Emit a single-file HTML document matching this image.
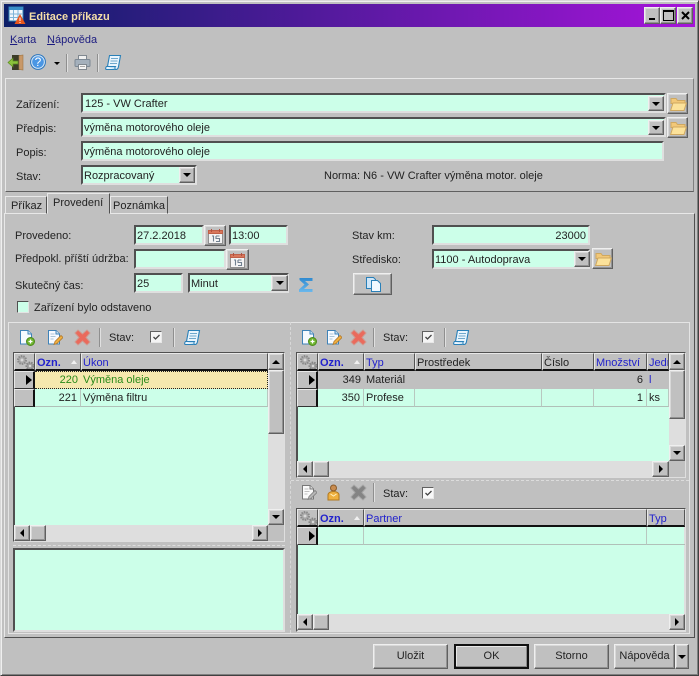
<!DOCTYPE html>
<html lang="cs"><head><meta charset="utf-8"><title>Editace příkazu</title>
<style>
*{box-sizing:border-box}
html,body{margin:0;padding:0}
body{width:699px;height:676px;overflow:hidden;background:#c0c0c0;position:relative;font:11px/14px "Liberation Sans",sans-serif;color:#222}
#w div,#w span,#w svg{position:absolute}
.t{white-space:nowrap}
.i{background:#ccffe9;border:2px solid;border-color:#505050 #dfdfdf #dfdfdf #505050;white-space:nowrap;padding:2px 0 0 1px;line-height:15px;overflow:hidden}
.b{background:#c0c0c0;border:1px solid;border-color:#efefef #606060 #606060 #efefef;box-shadow:inset -1px -1px #929292,inset 1px 1px #d8d8d8;text-align:center}
.h{background:#c0c0c0;border-right:1px solid #555;border-bottom:2px solid #111;border-left:1px solid #e8e8e8;border-top:1px solid #e8e8e8;white-space:nowrap;overflow:hidden;padding-left:1px;line-height:18px;color:#2222cc}
.c{border-right:1px solid #b8c8c0;border-bottom:1px solid #b0c0b8;white-space:nowrap;overflow:hidden;line-height:19px;padding:0 2px}
.r{text-align:right;padding-right:3px}
.tri{width:0;height:0}
.dn{border:4px solid transparent;border-top:4px solid #000;border-bottom:0;left:50%;top:50%;margin:-2px 0 0 -4px}
.up{border:4px solid transparent;border-bottom:4px solid #000;border-top:0;left:50%;top:50%;margin:-2px 0 0 -4px}
.lf{border:4px solid transparent;border-right:4px solid #000;border-left:0;left:50%;top:50%;margin:-4px 0 0 -2px}
.rt{border:4px solid transparent;border-left:4px solid #000;border-right:0;left:50%;top:50%;margin:-4px 0 0 -2px}
.sep{width:2px;background:#8f8f8f;border-right:1px solid #e0e0e0}
.tr{background:#dedede}
.d{border-top:1px dashed #dcdcdc}
.dv{border-left:1px dashed #d8d8d8}
.s{background:#e4e4e4}
</style></head><body><div id="w">
<svg width="0" height="0" style="left:0;top:0"><defs>
<symbol id="new" viewBox="0 0 17 17"><path d="M2.500 1.500h7.500l3.500 3.500v10h-11z" fill="#f6faff" stroke="#3f83b8"/><path d="M10 1.500v3.500h3.500" fill="#cfe4f5" stroke="#3f83b8"/><circle cx="12.500" cy="12.500" r="4" fill="#6fb52f" stroke="#4c8a1c"/><path d="M10.500 12.500h4M12.500 10.500v4" stroke="#fff" stroke-width="1.300"/></symbol>
<symbol id="edit" viewBox="0 0 17 17"><path d="M2.500 1.500h7.500l3.500 3.500v10h-11z" fill="#f6faff" stroke="#3f83b8"/><path d="M10 1.500v3.500h3.500" fill="#cfe4f5" stroke="#3f83b8"/><path d="M4.500 5h4M4.500 7.500h5M4.500 10h3" stroke="#a9c4d8"/><path d="M8 15.500l1-3 6-6 2 2-6 6z" fill="#f0b040" stroke="#b07a30" stroke-width=".8"/></symbol>
<symbol id="del" viewBox="0 0 17 17"><path d="M1 4l3-3 4.500 4 4.500-4 3 3-4 4.500 4 4.500-3 3-4.500-4-4.500 4-3-3 4-4.500z" fill="#ea6a5c" stroke="#cf9a90"/></symbol>
<symbol id="note" viewBox="0 0 17 17"><path d="M4.500 1.500h11l-2 11c-.3 1.800-1 3-2.500 3h-9.500c-1 0-1.300-1.800 0-3h1z" fill="#eaf5fd" stroke="#2a80b8" stroke-width="1.100"/><path d="M6 4.500h7M5.500 7h7M5 9.500h7" stroke="#6fa8cc"/><path d="M1.500 12.500h9c-.8 1-.8 2 0 3" fill="#bfe0f5" stroke="#2a80b8"/></symbol>
<symbol id="cal" viewBox="0 0 17 17"><rect x="1.500" y="2.500" width="14" height="13" fill="#f4f4f4" stroke="#909090"/><rect x="1.500" y="2.500" width="14" height="3" fill="#d8775c" stroke="#c06048"/><path d="M4.500 1v3M12.500 1v3" stroke="#b05040"/><path d="M5 8h1.500v5.500M9 8h3.500M9 8v2.500h3.500v3H9" fill="none" stroke="#708090" stroke-width="1.100"/></symbol>
<symbol id="fold" viewBox="0 0 17 15"><path d="M1 3V1.500h5l1.500 2H15v3H1z" fill="#f2c878" stroke="#cfa860"/><path d="M.6 13.500 3 6h13.400l-2.400 7.500z" fill="#fce29a" stroke="#cfa860"/></symbol>
<symbol id="gears" viewBox="0 0 19 17"><circle cx="6" cy="6" r="4" fill="#a8a8a8" stroke="#8a8a8a" stroke-width="2" stroke-dasharray="1.500 1"/><circle cx="6" cy="6" r="1.500" fill="#d8d8d8"/><circle cx="14" cy="12" r="3.500" fill="#a0a0a0" stroke="#848484" stroke-width="2" stroke-dasharray="1.500 1"/><circle cx="14" cy="12" r="1.200" fill="#d8d8d8"/></symbol>
</defs></svg>

<!-- window frame -->
<div style="left:0;top:0;width:699px;height:676px;border:1px solid;border-color:#d8d8d8 #404040 #404040 #d8d8d8;box-shadow:inset 1px 1px #efefef,inset -1px -1px #808080"></div>
<div style="left:4px;top:4px;width:691px;height:23px;background:linear-gradient(90deg,#0c1f68,#a614da)"></div>
<svg style="left:8px;top:6px" width="18" height="19" viewBox="0 0 18 19"><rect x="1" y="1" width="14" height="14" fill="#eef6fc" stroke="#2f7fb0"/><rect x="1" y="1" width="14" height="3" fill="#3a8fc8"/><path d="M5.500 4v11M10 4v11M1 8h14M1 11.500h14" stroke="#7db4d8"/><path d="M12 8l5.500 10h-11z" fill="#e8561c"/><path d="M12 11.500v3.500M12 16v1" stroke="#fff"/></svg>
<div class="t" style="left:29px;top:10px;color:#f5dfa8;font-weight:bold;font-size:11px">Editace příkazu</div>
<div class="b" style="left:644px;top:7px;width:16px;height:17px"><div style="left:4px;top:10px;width:6px;height:2px;background:#000"></div></div>
<div class="b" style="left:660px;top:7px;width:16px;height:17px"><div style="left:2px;top:2px;width:11px;height:11px;border:1px solid #000;border-top-width:2px"></div></div>
<div class="b" style="left:677px;top:7px;width:16px;height:17px"><svg style="left:3px;top:3px" width="9" height="9" viewBox="0 0 9 9"><path d="M1 1l7 7M8 1L1 8" stroke="#000" stroke-width="2"/></svg></div>

<!-- menu -->
<div class="t" style="left:10px;top:33px;color:#1c1c80"><u>K</u>arta</div>
<div class="t" style="left:47px;top:33px;color:#1c1c80"><u>N</u>ápověda</div>

<!-- toolbar -->
<svg style="left:7px;top:54px" width="17" height="17" viewBox="0 0 17 17"><path d="M5 1h11v15H5z" fill="#3c3c28"/><path d="M12 1.500l4-.5v15l-4-.5z" fill="#c89868" stroke="#a07848" stroke-width=".6"/><path d="M1 8.500 6 4v3h5v3H6v3z" fill="#8cc43c" stroke="#5a8a20" stroke-width=".7"/></svg>
<svg style="left:30px;top:54px" width="16" height="16" viewBox="0 0 16 16"><circle cx="8" cy="8" r="7.400" fill="#d4e6f6" stroke="#2a74bc"/><circle cx="8" cy="8" r="5.800" fill="#4a96e4"/></svg>
<div class="t" style="left:34px;top:55px;width:8px;text-align:center;color:#fff;font-size:12px">?</div>
<div class="tri" style="left:54px;top:62px;border:3px solid transparent;border-top:3px solid #000;border-bottom:0"></div>
<div class="sep" style="left:66px;top:54px;height:18px"></div>
<svg style="left:74px;top:54px" width="17" height="17" viewBox="0 0 17 17"><path d="M4.500 1.500h8v4h-8z" fill="#f0f0f0" stroke="#808890"/><rect x="1" y="5.500" width="15" height="7" rx="1" fill="#a4b0bc" stroke="#7c8894"/><path d="M4.500 10.500h8v5h-8z" fill="#f4f4f4" stroke="#808890"/><path d="M6 12.500h5" stroke="#aaa"/></svg>
<div class="sep" style="left:97px;top:54px;height:18px"></div>
<svg style="left:105px;top:54px" width="17" height="17"><use href="#note"/></svg>

<!-- top group -->
<div style="left:5px;top:78px;width:689px;height:114px;border:1px solid;border-color:#e8e8e8 #808080 #606060 #e8e8e8"></div>
<div class="t" style="left:16px;top:98px">Zařízení:</div>
<div class="i" style="left:81px;top:93px;width:585px;height:20px;padding-left:2px">125 - VW Crafter</div>
<div class="b" style="left:648px;top:96px;width:16px;height:15px"><div class="tri dn"></div></div>
<div class="b" style="left:667px;top:93px;width:21px;height:21px"><svg style="left:2px;top:3px" width="17" height="15"><use href="#fold"/></svg></div>
<div class="t" style="left:16px;top:122px">Předpis:</div>
<div class="i" style="left:81px;top:117px;width:585px;height:20px">výměna motorového oleje</div>
<div class="b" style="left:648px;top:120px;width:16px;height:15px"><div class="tri dn"></div></div>
<div class="b" style="left:667px;top:117px;width:21px;height:21px"><svg style="left:2px;top:3px" width="17" height="15"><use href="#fold"/></svg></div>
<div class="t" style="left:16px;top:146px">Popis:</div>
<div class="i" style="left:81px;top:141px;width:583px;height:20px">výměna motorového oleje</div>
<div class="t" style="left:16px;top:170px">Stav:</div>
<div class="i" style="left:81px;top:165px;width:116px;height:20px">Rozpracovaný</div>
<div class="b" style="left:179px;top:167px;width:16px;height:16px"><div class="tri dn"></div></div>
<div class="t" style="left:324px;top:169px">Norma: N6 - VW Crafter výměna motor. oleje</div>

<!-- tabs -->
<div style="left:4px;top:213px;width:691px;height:425px;border:1px solid;border-color:#e8e8e8 #505050 #505050 #e8e8e8"></div>
<div style="left:5px;top:196px;width:42px;height:18px;border:1px solid;border-color:#e8e8e8 #505050 transparent #e8e8e8"></div>
<div class="t" style="left:11px;top:199px">Příkaz</div>
<div style="left:47px;top:193px;width:63px;height:21px;background:#c0c0c0;border:1px solid;border-color:#e8e8e8 #505050 #c0c0c0 #e8e8e8"></div>
<div class="t" style="left:53px;top:196px">Provedení</div>
<div style="left:110px;top:196px;width:58px;height:18px;border:1px solid;border-color:#e8e8e8 #505050 transparent #e8e8e8"></div>
<div class="t" style="left:113px;top:199px">Poznámka</div>

<!-- form -->
<div class="t" style="left:15px;top:229px">Provedeno:</div>
<div class="i" style="left:134px;top:225px;width:70px;height:20px">27.2.2018</div>
<div class="b" style="left:204px;top:225px;width:22px;height:21px"><svg style="left:2px;top:2px" width="17" height="17"><use href="#cal"/></svg></div>
<div class="i" style="left:229px;top:225px;width:59px;height:20px">13:00</div>
<div class="t" style="left:15px;top:252px">Předpokl. příští údržba:</div>
<div class="i" style="left:134px;top:249px;width:92px;height:20px"></div>
<div class="b" style="left:226px;top:249px;width:23px;height:21px"><svg style="left:2px;top:2px" width="17" height="17"><use href="#cal"/></svg></div>
<div class="t" style="left:15px;top:279px">Skutečný čas:</div>
<div class="i" style="left:134px;top:273px;width:49px;height:20px">25</div>
<div class="i" style="left:188px;top:273px;width:101px;height:20px">Minut</div>
<div class="b" style="left:271px;top:275px;width:17px;height:16px"><div class="tri dn"></div></div>
<svg style="left:298px;top:277px" width="16" height="16" viewBox="0 0 16 16"><defs><linearGradient id="sg" x1="0" y1="0" x2="0" y2="1"><stop offset="0" stop-color="#2f8ad0"/><stop offset="1" stop-color="#6ab8ec"/></linearGradient></defs><path d="M1.500 1h13v3H7l4 3.500L6 12h8.500v3H1v-2.500L6.500 7.500 1.500 3z" fill="url(#sg)"/></svg>
<div style="left:17px;top:301px;width:12px;height:12px;background:#ccffe9;border:1px solid;border-color:#505050 #e4e4e4 #e4e4e4 #505050"></div>
<div class="t" style="left:34px;top:301px">Zařízení bylo odstaveno</div>

<div class="t" style="left:352px;top:229px">Stav km:</div>
<div class="i" style="left:432px;top:225px;width:158px;height:20px;text-align:right;padding-right:2px">23000</div>
<div class="t" style="left:352px;top:253px">Středisko:</div>
<div class="i" style="left:432px;top:249px;width:158px;height:20px">1100 - Autodoprava</div>
<div class="b" style="left:574px;top:251px;width:16px;height:16px"><div class="tri dn"></div></div>
<div class="b" style="left:592px;top:248px;width:21px;height:21px"><svg style="left:2px;top:3px" width="17" height="15"><use href="#fold"/></svg></div>
<div class="b" style="left:353px;top:273px;width:39px;height:22px"><svg style="left:11px;top:2px" width="17" height="17" viewBox="0 0 17 17"><path d="M1.500 1.500h7l2 2v9h-9z" fill="#cfe6f8" stroke="#2a80b8"/><path d="M6.500 4.500h6l3 3v8h-9z" fill="#f0f8ff" stroke="#2a80b8"/></svg></div>

<!-- panels -->
<div class="s" style="left:8px;top:322px;width:682px;height:1px"></div>
<div class="s" style="left:8px;top:322px;width:1px;height:311px"></div>
<div class="dv" style="left:290px;top:322px;height:311px"></div>
<div class="s" style="left:689px;top:322px;width:1px;height:311px"></div>
<div class="s" style="left:8px;top:633px;width:682px;height:1px"></div>

<!-- left toolbar -->
<svg style="left:18px;top:329px" width="17" height="17"><use href="#new"/></svg>
<svg style="left:46px;top:329px" width="17" height="17"><use href="#edit"/></svg>
<svg style="left:74px;top:329px" width="17" height="17"><use href="#del"/></svg>
<div class="sep" style="left:99px;top:328px;height:19px"></div>
<div class="t" style="left:109px;top:331px">Stav:</div>
<div style="left:150px;top:331px;width:12px;height:12px;background:#f4f4f4;border:1px solid;border-color:#606060 #e8e8e8 #e8e8e8 #606060"><svg style="left:1px;top:1px" width="9" height="9" viewBox="0 0 9 9"><path d="M1.500 4l2 2 4-4" fill="none" stroke="#444" stroke-width="1.300"/></svg></div>
<div class="sep" style="left:173px;top:328px;height:19px"></div>
<svg style="left:184px;top:329px" width="17" height="17"><use href="#note"/></svg>

<!-- left grid -->
<div style="left:13px;top:352px;width:272px;height:190px;background:#ccffe9;border:2px solid;border-color:#505050 #dfdfdf #dfdfdf #505050"></div>
<div class="h" style="left:14px;top:353px;width:21px;height:18px"><svg style="left:1px;top:0" width="19" height="17"><use href="#gears"/></svg></div>
<div class="h" style="left:35px;top:353px;width:46px;height:18px"><b>Ozn.</b><span style="left:35px;top:6px;width:0;height:0;border:3.500px solid transparent;border-bottom:4px solid #f0f0f0;border-top:0"></span></div>
<div class="h" style="left:81px;top:353px;width:187px;height:18px">Úkon</div>
<div class="h" style="left:14px;top:371px;width:21px;height:18px;color:#000;border-bottom:1px solid #333;border-right:2px solid #111"><div class="tri" style="left:11px;top:3px;border:5px solid transparent;border-left:6px solid #000;border-right:0"></div></div>
<div class="c r" style="left:35px;top:371px;width:46px;height:18px;background:#f6e8ae;color:#2a8a1a;border:0;border-top:1px dotted #222;border-bottom:1px dotted #222;line-height:16px">220</div>
<div class="c" style="left:81px;top:371px;width:187px;height:18px;background:#f6e8ae;color:#2a8a1a;border:0;border-top:1px dotted #222;border-bottom:1px dotted #222;border-right:1px dotted #222;line-height:16px">Výměna oleje</div>
<div class="h" style="left:14px;top:389px;width:21px;height:18px;border-bottom:1px solid #333;border-right:2px solid #111"></div>
<div class="c r" style="left:35px;top:389px;width:46px;height:18px">221</div>
<div class="c" style="left:81px;top:389px;width:187px;height:18px">Výměna filtru</div>
<div class="tr" style="left:268px;top:353px;width:16px;height:172px"></div>
<div class="b" style="left:268px;top:353px;width:16px;height:17px"><div class="tri up"></div></div>
<div class="b" style="left:268px;top:370px;width:16px;height:64px"></div>
<div class="b" style="left:268px;top:509px;width:16px;height:16px"><div class="tri dn"></div></div>
<div class="tr" style="left:14px;top:525px;width:254px;height:16px"></div>
<div class="b" style="left:14px;top:525px;width:16px;height:16px"><div class="tri lf"></div></div>
<div class="b" style="left:30px;top:525px;width:16px;height:16px"></div>
<div class="b" style="left:252px;top:525px;width:16px;height:16px"><div class="tri rt"></div></div>
<div style="left:268px;top:525px;width:16px;height:16px;background:#c0c0c0"></div>
<div class="d" style="left:13px;top:545px;width:272px"></div>
<div class="i" style="left:13px;top:548px;width:272px;height:84px"></div>

<!-- right toolbar -->
<svg style="left:300px;top:329px" width="17" height="17"><use href="#new"/></svg>
<svg style="left:325px;top:329px" width="17" height="17"><use href="#edit"/></svg>
<svg style="left:350px;top:329px" width="17" height="17"><use href="#del"/></svg>
<div class="sep" style="left:373px;top:328px;height:19px"></div>
<div class="t" style="left:383px;top:331px">Stav:</div>
<div style="left:422px;top:331px;width:12px;height:12px;background:#f4f4f4;border:1px solid;border-color:#606060 #e8e8e8 #e8e8e8 #606060"><svg style="left:1px;top:1px" width="9" height="9" viewBox="0 0 9 9"><path d="M1.500 4l2 2 4-4" fill="none" stroke="#444" stroke-width="1.300"/></svg></div>
<div class="sep" style="left:444px;top:328px;height:19px"></div>
<svg style="left:453px;top:329px" width="17" height="17"><use href="#note"/></svg>

<!-- right grid 1 -->
<div style="left:296px;top:352px;width:390px;height:126px;background:#ccffe9;border:2px solid;border-color:#505050 #dfdfdf #dfdfdf #505050"></div>
<div class="h" style="left:297px;top:353px;width:21px;height:18px"><svg style="left:1px;top:0" width="19" height="17"><use href="#gears"/></svg></div>
<div class="h" style="left:318px;top:353px;width:46px;height:18px"><b>Ozn.</b><span style="left:35px;top:6px;width:0;height:0;border:3.500px solid transparent;border-bottom:4px solid #f0f0f0;border-top:0"></span></div>
<div class="h" style="left:364px;top:353px;width:51px;height:18px">Typ</div>
<div class="h" style="left:415px;top:353px;width:127px;height:18px;color:#222">Prostředek</div>
<div class="h" style="left:542px;top:353px;width:52px;height:18px;color:#222">Číslo</div>
<div class="h" style="left:594px;top:353px;width:53px;height:18px">Množství</div>
<div class="h" style="left:647px;top:353px;width:22px;height:18px">Jedn</div>
<div class="h" style="left:297px;top:371px;width:21px;height:18px;border-bottom:1px solid #333;border-right:2px solid #111"><div class="tri" style="left:11px;top:3px;border:5px solid transparent;border-left:6px solid #000;border-right:0"></div></div>
<div style="left:318px;top:371px;width:351px;height:18px;background:#c0c0c0"></div>
<div class="t" style="left:318px;top:371px;width:46px;text-align:right;padding-right:3px;line-height:18px">349</div>
<div class="t" style="left:366px;top:371px;line-height:18px">Materiál</div>
<div class="t" style="left:594px;top:371px;width:52px;text-align:right;padding-right:3px;line-height:18px">6</div>
<div class="t" style="left:649px;top:371px;line-height:18px;color:#2222cc">l</div>
<div class="h" style="left:297px;top:389px;width:21px;height:18px;border-bottom:1px solid #333;border-right:2px solid #111"></div>
<div class="c r" style="left:318px;top:389px;width:46px;height:18px">350</div>
<div class="c" style="left:364px;top:389px;width:51px;height:18px">Profese</div>
<div class="c" style="left:415px;top:389px;width:127px;height:18px"></div>
<div class="c" style="left:542px;top:389px;width:52px;height:18px"></div>
<div class="c r" style="left:594px;top:389px;width:53px;height:18px">1</div>
<div class="c" style="left:647px;top:389px;width:22px;height:18px">ks</div>
<div class="tr" style="left:669px;top:353px;width:16px;height:108px"></div>
<div class="b" style="left:669px;top:353px;width:16px;height:17px"><div class="tri up"></div></div>
<div class="b" style="left:669px;top:370px;width:16px;height:49px"></div>
<div class="b" style="left:669px;top:445px;width:16px;height:16px"><div class="tri dn"></div></div>
<div class="tr" style="left:297px;top:461px;width:372px;height:16px"></div>
<div class="b" style="left:297px;top:461px;width:16px;height:16px"><div class="tri lf"></div></div>
<div class="b" style="left:313px;top:461px;width:16px;height:16px"></div>
<div class="b" style="left:652px;top:461px;width:17px;height:16px"><div class="tri rt"></div></div>
<div style="left:669px;top:461px;width:16px;height:16px;background:#c0c0c0"></div>
<div class="d" style="left:291px;top:480px;width:398px"></div>

<!-- right toolbar 2 -->
<svg style="left:300px;top:484px;filter:grayscale(1)" width="17" height="17"><use href="#edit"/></svg>
<svg style="left:325px;top:484px" width="17" height="17" viewBox="0 0 17 17"><circle cx="8.500" cy="4" r="3" fill="#c88c50" stroke="#8a5a28"/><path d="M3 16v-5c0-2 2-3.500 5.500-3.500S14 9 14 11v5z" fill="#eeb040" stroke="#b07820"/><path d="M5.500 10l3 2 3-2" fill="none" stroke="#fff0c0"/></svg>
<svg style="left:350px;top:484px;filter:grayscale(1)" width="17" height="17"><use href="#del"/></svg>
<div class="sep" style="left:373px;top:483px;height:19px"></div>
<div class="t" style="left:383px;top:487px">Stav:</div>
<div style="left:422px;top:487px;width:12px;height:12px;background:#f8f8f8;border:1px solid;border-color:#606060 #e8e8e8 #e8e8e8 #606060"><svg style="left:1px;top:1px" width="9" height="9" viewBox="0 0 9 9"><path d="M1.500 4l2 2 4-4" fill="none" stroke="#444" stroke-width="1.300"/></svg></div>

<!-- right grid 2 -->
<div style="left:296px;top:508px;width:390px;height:124px;background:#ccffe9;border:2px solid;border-color:#505050 #dfdfdf #dfdfdf #505050"></div>
<div class="h" style="left:297px;top:509px;width:21px;height:18px"><svg style="left:1px;top:0" width="19" height="17"><use href="#gears"/></svg></div>
<div class="h" style="left:318px;top:509px;width:46px;height:18px"><b>Ozn.</b><span style="left:35px;top:6px;width:0;height:0;border:3.500px solid transparent;border-bottom:4px solid #f0f0f0;border-top:0"></span></div>
<div class="h" style="left:364px;top:509px;width:283px;height:18px">Partner</div>
<div class="h" style="left:647px;top:509px;width:38px;height:18px">Typ</div>
<div class="h" style="left:297px;top:527px;width:21px;height:18px;border-bottom:1px solid #333;border-right:2px solid #111"><div class="tri" style="left:11px;top:3px;border:5px solid transparent;border-left:6px solid #000;border-right:0"></div></div>
<div class="c" style="left:318px;top:527px;width:46px;height:18px"></div>
<div class="c" style="left:364px;top:527px;width:283px;height:18px"></div>
<div class="c" style="left:647px;top:527px;width:38px;height:18px;border-right:0"></div>
<div class="tr" style="left:297px;top:614px;width:388px;height:16px"></div>
<div class="b" style="left:297px;top:614px;width:16px;height:16px"><div class="tri lf"></div></div>
<div class="b" style="left:313px;top:614px;width:16px;height:16px"></div>
<div class="b" style="left:669px;top:614px;width:16px;height:16px"><div class="tri rt"></div></div>

<!-- buttons -->
<div class="b" style="left:373px;top:644px;width:75px;height:25px;line-height:23px">Uložit</div>
<div class="b" style="left:454px;top:644px;width:75px;height:25px;line-height:21px;border:2px solid #111;box-shadow:inset -1px -1px #8a8a8a,inset 1px 1px #e8e8e8">OK</div>
<div class="b" style="left:534px;top:644px;width:75px;height:25px;line-height:23px">Storno</div>
<div class="b" style="left:614px;top:644px;width:61px;height:25px;line-height:23px">Nápověda</div>
<div class="b" style="left:675px;top:644px;width:14px;height:25px"><div class="tri dn"></div></div>
</div></body></html>
